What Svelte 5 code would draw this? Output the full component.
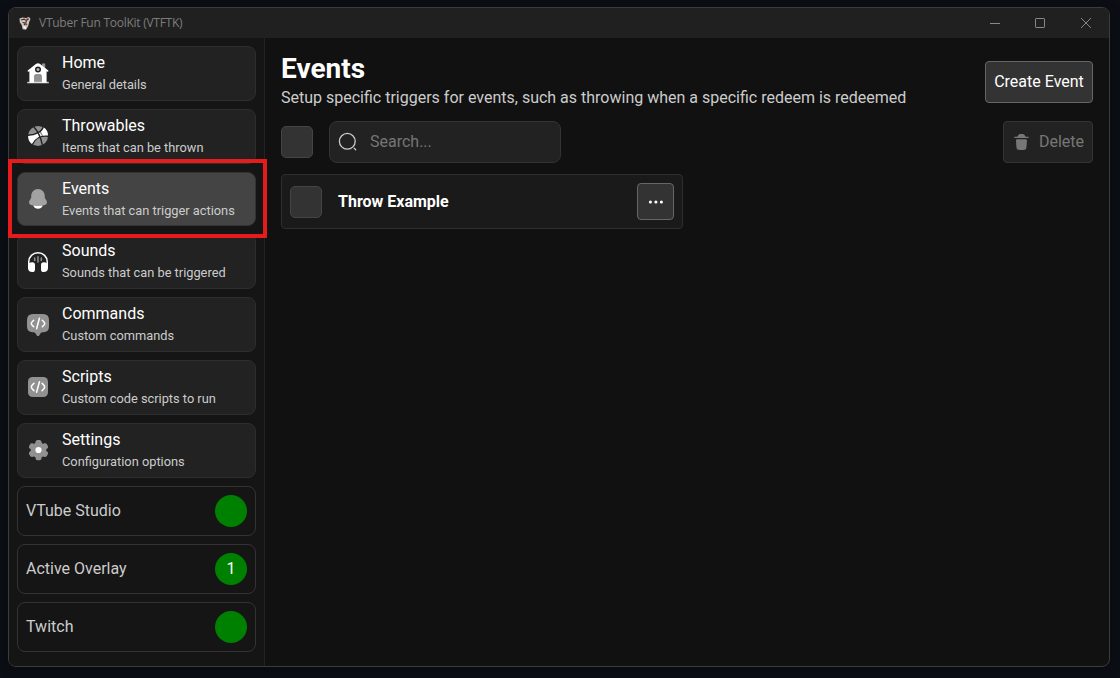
<script>
  const pages = [
    { icon: 'home', title: 'Home', text: 'General details' },
    { icon: 'ball', title: 'Throwables', text: 'Items that can be thrown' },
    { icon: 'bell', title: 'Events', text: 'Events that can trigger actions', active: true },
    { icon: 'sound', title: 'Sounds', text: 'Sounds that can be triggered' },
    { icon: 'command', title: 'Commands', text: 'Custom commands' },
    { icon: 'script', title: 'Scripts', text: 'Custom code scripts to run' },
    { icon: 'gear', title: 'Settings', text: 'Configuration options' }
  ];
  const statuses = [
    { name: 'VTube Studio', value: '' },
    { name: 'Active Overlay', value: '1' },
    { name: 'Twitch', value: '' }
  ];
</script>

{#snippet icon(name)}
  <svg class="icon" viewBox="0 0 24 24" width="24" height="24" fill="#fff">
    {#if name === 'home'}
      <path d="M16 2.500h3.200v6L16 6z" opacity=".5" />
      <path fill-rule="evenodd" d="M10.200 2.800a3 3 0 0 1 3.600 0l8.500 6.600a.8.8 0 0 1-.8 1.300l-.9-.5v11.500H3.400V10.200l-.9.5a.8.8 0 0 1-.8-1.300zM12 5.600a3 3 0 1 0 0 6a3 3 0 0 0 0-6zM8.200 21.500h7.600V16c0-2.200-.8-3-3-3h-1.600c-2.200 0-3 .8-3 3z" />
      <path d="M8.200 21.500V16c0-2.200.8-3 3-3h1.600c2.200 0 3 .8 3 3v5.500z" opacity=".5" />
      <circle cx="12" cy="8.600" r="1.500" opacity=".65" />
      <path d="M1.200 20.800h21.600v1.500H1.200z" opacity=".75" />
    {:else if name === 'ball'}
      <circle cx="12" cy="12" r="10" opacity=".5" />
      <path d="M2.200 11.500C7 11 11 9.600 13.300 7.800l2.800 4.800C12 14 8.500 17 6.700 20.500A10 10 0 0 1 2.200 11.500zM14.500 6.700c1.300-1.300 2.200-2.500 2.600-3.600A10 10 0 0 1 22 12.400c-1.500-.4-3.200-.3-4.700-.1z" />
      <path d="M7.800 2.700c4 4.500 7 10.200 8.500 18.200M1.800 11.300C9 11 16 8 17.400 2.500M6.200 20.800C9 14.500 15 11.200 22.200 12.300" fill="none" stroke="#222" stroke-width="1.400" />
    {:else if name === 'bell'}
      <path d="M18.750 9v.7c0 .85.24 1.670.7 2.370l1.100 1.720c1.020 1.570.24 3.700-1.520 4.200a25.800 25.800 0 0 1-14.060 0c-1.760-.5-2.540-2.630-1.530-4.200l1.110-1.720c.46-.7.700-1.520.700-2.370V9c0-3.870 3.020-7 6.750-7s6.750 3.130 6.750 7z" opacity=".5" />
      <path d="M7.240 18.540a5.100 5.100 0 0 0 9.520 0c-3.140.6-6.380.6-9.520 0z" />
    {:else if name === 'sound'}
      <path d="M8.700 8v2.600M12 6.700v5.200M15.300 8v2.600" fill="none" stroke="#fff" stroke-width="1.500" stroke-linecap="round" opacity=".5" />
      <path d="M2.750 18v-6.200a9.250 9.050 0 0 1 18.500 0V18" fill="none" stroke="#fff" stroke-width="1.500" />
      <path d="M2 16.400c0-2.900 1.400-4.100 4.200-4.100 2 0 2.800.9 2.800 2.700v4.400c0 1.700-.9 2.600-2.700 2.600C3.500 22 2 20.800 2 18zM22 16.400c0-2.900-1.400-4.100-4.200-4.100-2 0-2.800.9-2.800 2.700v4.400c0 1.700.9 2.600 2.700 2.600C20.500 22 22 20.800 22 18z" />
    {:else if name === 'command'}
      <path d="M7 1h10q6 0 6 6v6.500q0 5.500-5.500 5.700c-1.800.1-2.500.4-3.200 1.500l-1.100 1.700q-1.200 1.400-2.400 0l-1.100-1.700c-.7-1.100-1.400-1.400-3.200-1.500Q1 19 1 13.500V7q0-6 6-6z" opacity=".5" />
      <path d="M13.400 5.200l-2.800 10.600M7.700 7.200L6.200 8.700q-1.900 1.800 0 3.600l1.500 1.500M16.300 7.200l1.500 1.500q1.900 1.800 0 3.600l-1.500 1.500" fill="none" stroke="#fff" stroke-width="1.500" stroke-linecap="round" />
    {:else if name === 'script'}
      <rect x="2" y="2" width="20" height="20" rx="4.600" opacity=".5" />
      <path d="M13.490 6.800l-2.900 10.400M8 8.300l-1.600 1.600q-2.100 2 0 4.100L8 15.700M16 8.300l1.600 1.600q2.100 2 0 4.100L16 15.700" fill="none" stroke="#fff" stroke-width="1.500" stroke-linecap="round" />
    {:else}
      <path d="M14.280 2.150C13.900 2 13.430 2 12.500 2s-1.400 0-1.780.150a2 2 0 0 0-1.080 1.090c-.1.230-.140.500-.160.880a1.600 1.600 0 0 1-2.430 1.400c-.340-.180-.590-.280-.840-.310a2 2 0 0 0-1.480.4c-.320.240-.550.640-1.010 1.440s-.7 1.200-.750 1.600a2 2 0 0 0 .4 1.480c.150.200.360.370.690.570a1.600 1.600 0 0 1 0 2.800c-.330.200-.540.370-.690.570a2 2 0 0 0-.4 1.480c.050.400.280.800.750 1.600s.690 1.200 1.010 1.440c.420.320.950.460 1.480.4.250-.3.500-.130.840-.310a1.600 1.600 0 0 1 2.430 1.400c.20.380.60.650.160.880.2.490.590.880 1.080 1.090.380.150.850.150 1.780.150s1.400 0 1.780-.150a2 2 0 0 0 1.080-1.090c.1-.230.140-.500.160-.880a1.600 1.600 0 0 1 2.430-1.400c.340.180.590.280.840.310a2 2 0 0 0 1.480-.4c.320-.240.550-.640 1.010-1.440s.7-1.200.750-1.600a2 2 0 0 0-.4-1.480c-.150-.2-.360-.370-.690-.570a1.600 1.600 0 0 1 0-2.800c.330-.2.540-.370.690-.570a2 2 0 0 0 .4-1.480c-.050-.4-.280-.8-.750-1.600s-.690-1.200-1.010-1.440a2 2 0 0 0-1.480-.4c-.250.030-.5.130-.840.310a1.600 1.600 0 0 1-2.430-1.400c-.020-.380-.060-.650-.160-.880a2 2 0 0 0-1.080-1.090z" opacity=".5" />
      <circle cx="12.500" cy="12" r="3.100" />
    {/if}
  </svg>
{/snippet}

<div class="desktop">
  <div class="window">
    <header class="titlebar">
      <svg class="logo" width="14" height="15" viewBox="0 0 14 15">
        <path d="M1.500 2.500l3-1 3.500.5 3-1 1.500 2-1.300 3-1 4-2.200 3.800-3.400-.6-.8-4-2-3z" fill="#c9c5c1" />
        <path d="M3 4l3-.8 2.500 1.200 2.200-1.600M4.500 6.500l3 .5 1-2M6 9l1.500-1.500L9 9" fill="none" stroke="#4b302b" stroke-width="1.200" />
        <path d="M7 3.700l3-1.500M7.500 6.500l1 2" stroke="#c95c35" />
        <path d="M5.500 10.500l2.300 2" stroke="#fff" stroke-width="1.500" />
      </svg>
      <span class="app-name">VTuber Fun ToolKit (VTFTK)</span>
      <div class="controls">
        <svg width="12" height="12" viewBox="0 0 12 12"><path d="M1 6.500h10" /></svg>
        <svg width="12" height="12" viewBox="0 0 12 12"><rect x="1.500" y="1.500" width="9" height="9" rx=".6" /></svg>
        <svg width="12" height="12" viewBox="0 0 12 12"><path d="M1 1l10 10M11 1L1 11" /></svg>
      </div>
    </header>
    <div class="body">
      <nav class="sidebar">
        {#each pages as page}
          <div class="page" class:active={page.active}>
            {@render icon(page.icon)}
            <div class="labels">
              <span class="title">{page.title}</span>
              <span class="text">{page.text}</span>
            </div>
            {#if page.active}<div class="highlight"></div>{/if}
          </div>
        {/each}
        {#each statuses as status}
          <div class="status">
            <span>{status.name}</span>
            <span class="dot">{status.value}</span>
          </div>
        {/each}
      </nav>
      <main>
        <div class="heading">
          <div>
            <h1>Events</h1>
            <p>Setup specific triggers for events, such as throwing when a specific redeem is redeemed</p>
          </div>
          <button class="create">Create Event</button>
        </div>
        <div class="toolbar">
          <span class="checkbox"></span>
          <div class="search">
            <svg width="20" height="20" viewBox="0 0 20 20" fill="none" stroke="#ccc" stroke-width="1.300" stroke-linecap="round">
              <circle cx="9.300" cy="9.300" r="7.900" /><path d="M16.100 16.100l1.600 1.600" />
            </svg>
            <span class="placeholder">Search...</span>
          </div>
          <button class="delete">
            <svg width="20" height="20" viewBox="0 0 24 24" fill="#777">
              <path d="M2.750 6.170c0-.460.350-.840.780-.840h2.670c.530-.010 1-.370 1.180-.910l.150-.450c.080-.220.140-.420.240-.600a2.600 2.600 0 0 1 1.660-1.340C9.630 2 9.830 2 10.060 2h3.890c.230 0 .430 0 .620.030a2.600 2.600 0 0 1 1.660 1.340c.1.180.160.380.240.600l.150.450c.18.540.740.900 1.270.91h2.570c.430 0 .780.380.780.840s-.350.830-.780.830H3.530c-.430 0-.780-.370-.780-.830z" />
              <path d="M11.600 22h.800c2.750 0 4.120 0 5.020-.880.890-.870.980-2.310 1.160-5.190l.270-4.150c.1-1.560.150-2.340-.3-2.840-.450-.490-1.210-.490-2.730-.490H8.180c-1.520 0-2.280 0-2.730.49-.450.500-.4 1.280-.3 2.840l.270 4.150c.180 2.880.270 4.320 1.160 5.190.900.880 2.270.880 5.020.880z" />
            </svg>
            <span class="placeholder">Delete</span>
          </button>
        </div>
        <div class="event">
          <span class="checkbox"></span>
          <strong>Throw Example</strong>
          <button class="more" aria-label="More">
            <svg width="16" height="16" viewBox="0 0 16 16" fill="#fff"><circle cx="2.400" cy="8" r="1.550" /><circle cx="7.900" cy="8" r="1.550" /><circle cx="13.400" cy="8" r="1.550" /></svg>
          </button>
        </div>
      </main>
    </div>
  </div>
</div>

<style>
  :global(body) { background: #0b0e14; }
  * { box-sizing: border-box; }
  .desktop {
    width: 1120px; height: 678px; padding: 7px 10px 11px 8px;
    background: #0b0e14; font-family: Roboto, sans-serif; font-size: 16px; color: #ccc; overflow: hidden;
  }
  .window {
    height: 660px; display: flex; flex-direction: column;
    border: 1px solid #3b3c3e; border-radius: 8px; background: #111;
    box-shadow: 0 3px 12px #0004;
  }
  .titlebar {
    flex: none; height: 30px; display: flex; align-items: center;
    padding: 0 17px 0 9px; background: #202020; border-radius: 7px 7px 0 0;
  }
  .app-name { margin-left: 7px; font: 12px/16px "Open Sans", sans-serif; letter-spacing: -0.26px; color: #7d7d7d; }
  .controls { margin-left: auto; display: flex; gap: 33px; }
  .controls svg { fill: none; stroke: #888; stroke-width: 1; display: block; }
  .controls svg:last-child { margin-left: 1px; }
  .body { flex: 1; min-height: 0; display: flex; }
  .sidebar {
    flex: none; width: 256px; padding: 8px; display: flex; flex-direction: column; gap: 8px;
    background: #151515; border-right: 1px solid #222; border-radius: 0 0 0 7px;
  }
  .page {
    position: relative; flex: none; height: 54.800px; width: 239px; padding: 0 8px; display: flex; align-items: center; gap: 12px;
    background: #222; border: 1px solid #2e2e2e; border-radius: 8px;
  }
  .page.active { background: #444; border-color: #333; }
  .icon { flex: none; display: block; }
  .labels { display: flex; flex-direction: column; gap: 5px; padding-bottom: 1.600px; }
  .title { color: #fff; line-height: 19px; }
  .text { font-size: 12.800px; line-height: 15px; white-space: nowrap; }
  .highlight {
    position: absolute; z-index: 1; left: -10px; top: -13.600px; width: 259px; height: 79px; border: 4px solid #e61c1c;
  }
  .status {
    flex: none; width: 239px; height: 50px; padding: 0 8px; display: flex; align-items: center; justify-content: space-between;
    border: 1px solid #333; border-radius: 8px;
  }
  .dot {
    width: 32px; height: 32px; display: grid; place-items: center; border-radius: 50%; background: #008000; color: #fff;
  }
  main { flex: 1; min-width: 0; padding: 16px; display: flex; flex-direction: column; }
  .heading { display: flex; align-items: center; justify-content: space-between; height: 56px; }
  h1 { margin: 0 0 5px; font-size: 28px; line-height: 28px; font-weight: 700; color: #fff; }
  p { margin: 0 0 2px; line-height: 19px; }
  button {
    font: inherit; display: flex; align-items: center; justify-content: center; padding: 0 8px;
    border: 1px solid #666; border-radius: 4px; background: #333; color: #fff;
  }
  .create { height: 42px; width: 108px; padding-bottom: 2px; white-space: nowrap; }
  .toolbar { display: flex; align-items: center; margin-top: 11px; height: 42px; }
  .placeholder { padding-bottom: 2px; }
  .checkbox { flex: none; width: 32px; height: 32px; background: #333; border: 1px solid #444; border-radius: 5px; }
  .search {
    margin-left: 16px; width: 232px; height: 42px; padding: 0 8px; display: flex; align-items: center; gap: 12px;
    background: #222; border: 1px solid #333; border-radius: 8px; color: #757575;
  }
  .delete { margin-left: auto; width: 90px; height: 42px; gap: 8px; background: #222; border-color: #333; color: #777; }
  .event {
    margin-top: 11px; width: 402px; height: 55px; padding: 0 8px; display: flex; align-items: center;
    background: #1a1a1a; border: 1px solid #2e2e2e; border-radius: 4px;
  }
  .event strong { margin-left: 16px; color: #fff; font-weight: 700; }
  .more { margin-left: auto; width: 37px; height: 37px; padding: 0; }
</style>
